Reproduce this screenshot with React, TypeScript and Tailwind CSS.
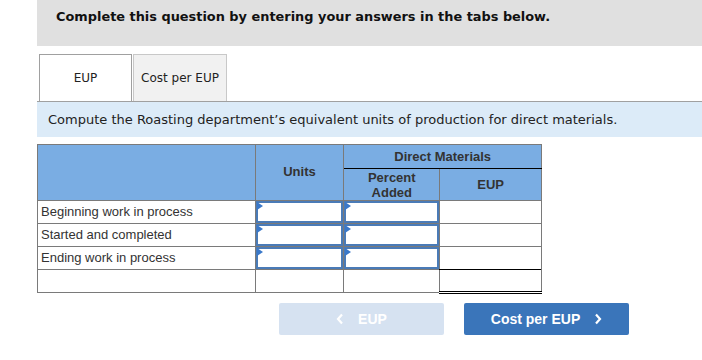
import React from "react";

const verdana = { fontFamily: '"DejaVu Sans", Verdana, sans-serif' };
const arial = { fontFamily: '"Liberation Sans", Arial, sans-serif' };

function InputCell() {
  return (
    <div className="relative h-[22px] border-2 border-[#4a7bb7] bg-white">
      <div className="absolute left-[-1px] top-[-1px] h-0 w-0 border-y-[4px] border-l-[6px] border-y-transparent border-l-[#3a78c9]" />
    </div>
  );
}

export default function App() {
  const rows = ["Beginning work in process", "Started and completed", "Ending work in process"];
  return (
    <div className="w-[702px] h-[360px] bg-white pl-[37px]" style={verdana}>
      <div className="h-[46px] bg-[#e0e0e0] pl-[19px] pt-[7px] text-[12.9px] font-bold text-[#111]">
        Complete this question by entering your answers in the tabs below.
      </div>
      <div className="mt-[8px] flex items-end border-b border-[#a0a0a0] pl-[2px]">
        <div className="flex h-[47px] w-[93px] items-center justify-center border border-b-0 border-[#a0a0a0] bg-white text-[12px] text-[#222]">
          EUP
        </div>
        <div className="ml-[1px] flex h-[47px] w-[94px] items-center justify-center border border-b-0 border-[#c8c8c8] bg-[#f1f1f1] text-[12px] text-[#222]">
          Cost per EUP
        </div>
      </div>
      <div className="flex h-[35px] items-center bg-[#dcebf8] pl-[11px] text-[13px] text-[#222]">
        Compute the Roasting department’s equivalent units of production for direct materials.
      </div>
      <table className="mt-[7px] w-[505px] border-collapse text-[13px] text-[#333]" style={arial}>
        <colgroup>
          <col className="w-[218px]" />
          <col className="w-[89px]" />
          <col className="w-[96px]" />
          <col className="w-[102px]" />
        </colgroup>
        <thead>
          <tr className="h-[24px] bg-[#7aade3]">
            <th rowSpan={2} className="border border-[#7a7a7a]" />
            <th rowSpan={2} className="border border-[#7a7a7a] pb-[2px] text-center font-bold">Units</th>
            <th colSpan={2} className="border border-[#7a7a7a] border-b-black text-center font-bold">
              Direct Materials
            </th>
          </tr>
          <tr className="h-[32px] bg-[#7aade3]">
            <th className="border border-[#7a7a7a] border-t-black text-center font-bold leading-[15px]">
              Percent
              <br />
              Added
            </th>
            <th className="border border-[#7a7a7a] border-t-black text-center font-bold">EUP</th>
          </tr>
        </thead>
        <tbody>
          {rows.map((r) => (
            <tr key={r} className="h-[23px]">
              <td className="border border-[#7a7a7a] pl-[3px] leading-[22px]">{r}</td>
              <td className="border border-[#7a7a7a] p-0">
                <InputCell />
              </td>
              <td className="border border-[#7a7a7a] p-0">
                <InputCell />
              </td>
              <td className="border border-[#7a7a7a]" />
            </tr>
          ))}
          <tr className="h-[23px]">
            <td className="border border-[#7a7a7a]" />
            <td className="border border-[#7a7a7a]" />
            <td className="border border-[#7a7a7a]" />
            <td className="border border-[#7a7a7a] border-t-black border-b-[3px] border-b-black border-double" />
          </tr>
        </tbody>
      </table>
      <div className="ml-[242px] mt-[9px] flex gap-[20px]" style={arial}>
        <div className="flex h-[32px] w-[165px] items-center justify-center gap-[14px] rounded-[2px] bg-[#d6e2f1] text-[14px] font-bold text-white">
          <svg width="8" height="12" viewBox="0 0 8 12">
            <path d="M6 1.5 L2 6 L6 10.5" fill="none" stroke="white" strokeWidth="2.2" />
          </svg>
          <span>EUP</span>
        </div>
        <div className="flex h-[32px] w-[165px] items-center justify-center gap-[14px] rounded-[2px] bg-[#3a75ba] text-[14px] font-bold text-white">
          <span>Cost per EUP</span>
          <svg width="8" height="12" viewBox="0 0 8 12">
            <path d="M2 1.5 L6 6 L2 10.5" fill="none" stroke="white" strokeWidth="2.2" />
          </svg>
        </div>
      </div>
    </div>
  );
}
